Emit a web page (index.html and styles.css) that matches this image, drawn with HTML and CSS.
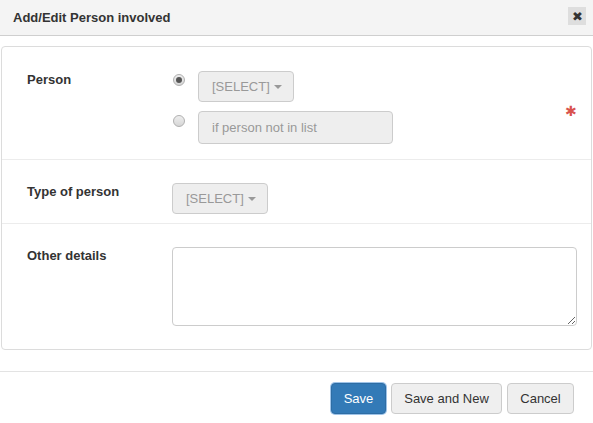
FILE: index.html
```html
<!DOCTYPE html>
<html>
<head>
<meta charset="utf-8">
<link rel="stylesheet" href="styles.css">
</head>
<body>
<div class="modal">
  <div class="modal-header">
    <span class="modal-title">Add/Edit Person involved</span>
    <span class="close-btn">&#10006;</span>
  </div>
  <div class="panel">
    <div class="row row-person">
      <div class="label">Person</div>
      <div class="controls">
        <div class="choice">
          <span class="radio checked"></span>
          <span class="select-btn">[SELECT] <span class="caret"></span></span>
        </div>
        <div class="choice choice-input">
          <span class="radio radio-low"></span>
          <span class="text-input">if person not in list</span>
        </div>
      </div>
      <span class="required">&#10033;</span>
    </div>
    <div class="row row-type">
      <div class="label">Type of person</div>
      <div class="controls">
        <span class="select-btn">[SELECT] <span class="caret"></span></span>
      </div>
    </div>
    <div class="row row-details">
      <div class="label">Other details</div>
      <div class="controls controls-wide">
        <textarea class="textarea"></textarea>
      </div>
    </div>
  </div>
  <div class="modal-footer">
    <button class="btn btn-primary btn-save">Save</button>
    <button class="btn btn-new">Save and New</button>
    <button class="btn btn-cancel">Cancel</button>
  </div>
</div>
</body>
</html>
```

FILE: styles.css
```css
* { box-sizing: border-box; }
html, body {
  margin: 0;
  padding: 0;
  background: #fff;
  font-family: "Liberation Sans", Arial, sans-serif;
  font-size: 13px;
  color: #333;
}
.modal { width: 593px; }
.modal-header {
  height: 36px;
  background: #f4f4f4;
  border-bottom: 1px solid #cfcfcf;
  display: flex;
  align-items: center;
  padding: 0 7px 0 13px;
}
.modal-title {
  font-weight: bold;
  font-size: 13px;
  flex: 1;
  margin-top: -1px;
}
.close-btn {
  width: 18px;
  height: 18px;
  background: #dedede;
  display: flex;
  align-items: center;
  justify-content: center;
  font-size: 13px;
  line-height: 13px;
  color: #333;
  margin-top: -3px;
}
.panel {
  margin: 10px 1px 0 1px;
  border: 1px solid #dcdcdc;
  border-radius: 4px;
}
.row {
  display: flex;
  align-items: flex-start;
  padding-left: 25px;
  border-bottom: 1px solid #ececec;
}
.row:last-child { border-bottom: none; }
.row-person { padding-top: 24px; padding-bottom: 15px; }
.row-type { padding-top: 23px; padding-bottom: 9px; }
.row-details { padding-top: 23px; padding-bottom: 23px; }
.label {
  width: 145px;
  flex: none;
  font-weight: bold;
  line-height: 18px;
}
.controls { display: flex; flex-direction: column; }
.controls-wide { flex: 1; margin-right: 14px; }
.choice { display: flex; align-items: flex-start; }
.choice-input { margin-top: 9px; }
.radio {
  width: 12px;
  height: 12px;
  border-radius: 50%;
  border: 1px solid #b0b0b0;
  background: linear-gradient(#eeeeee, #d6d6d6);
  margin: 3px 13px 0 1px;
  flex: none;
  position: relative;
}
.radio-low { margin-top: 4px; }
.radio.checked::after {
  content: "";
  position: absolute;
  left: 2px;
  top: 2px;
  width: 6px;
  height: 6px;
  border-radius: 50%;
  background: #555;
}
.select-btn {
  display: inline-flex;
  align-items: center;
  height: 31px;
  width: 96px;
  padding: 0 12px 0 13px;
  background: #eeeeee;
  border: 1px solid #cccccc;
  border-radius: 4px;
  color: #999;
  white-space: nowrap;
}
.caret {
  display: inline-block;
  width: 0;
  height: 0;
  margin-left: 4px;
  border-left: 4px solid transparent;
  border-right: 4px solid transparent;
  border-top: 4px solid #999;
}
.text-input {
  display: flex;
  align-items: center;
  width: 195px;
  height: 33px;
  padding: 0 13px;
  background: #eeeeee;
  border: 1px solid #cccccc;
  border-radius: 4px;
  color: #999;
}
.required {
  margin-left: auto;
  margin-right: 14px;
  align-self: center;
  margin-top: 7px;
  color: #d9534f;
  font-size: 14px;
  line-height: 14px;
}
.textarea {
  display: block;
  width: 100%;
  height: 79px;
  border: 1px solid #cccccc;
  border-radius: 4px;
  background: #fff;
  font-family: inherit;
  font-size: 13px;
  resize: both;
}
.modal-footer {
  margin-top: 21px;
  border-top: 1px solid #e3e3e3;
  padding: 11px 19px 9px 0;
  display: flex;
  justify-content: flex-end;
  gap: 5px;
}
.btn {
  height: 31px;
  padding: 0;
  font-family: "Liberation Sans", Arial, sans-serif;
  font-size: 13px;
  color: #333;
  background: #efefef;
  border: 1px solid #cccccc;
  border-radius: 4px;
}
.btn-save { width: 55px; }
.btn-new { width: 111px; }
.btn-cancel { width: 67px; }
.btn-primary {
  background: #337ab7;
  border-color: #2e6da4;
  color: #fff;
  box-shadow: 0 0 0 1px #9ec3e8;
}
```
